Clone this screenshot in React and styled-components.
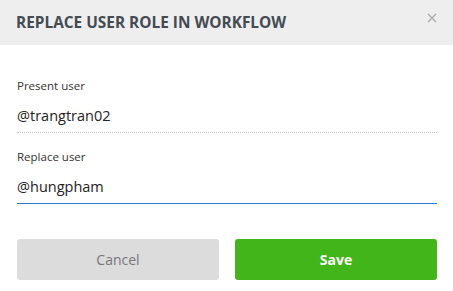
import React, { useState } from 'react';
import styled, { createGlobalStyle } from 'styled-components';

const GlobalStyle = createGlobalStyle`
  html, body {
    margin: 0;
    padding: 0;
    background: #ffffff;
    font-family: "Open Sans", "Noto Sans", sans-serif;
  }
`;

const DialogStyled = styled.div`
  width: 453px;
  height: 291px;
  background: #ffffff;
  display: flex;
  flex-direction: column;
`;

const HeaderStyled = styled.div`
  height: 45px;
  background: #eeeeee;
  display: flex;
  align-items: center;
  justify-content: space-between;
  padding: 0 14px 0 16px;
  box-sizing: border-box;
`;

const Title = styled.h1`
  margin: 0;
  font-size: 15.4px;
  font-weight: 700;
  color: #444b52;
`;

const CloseButton = styled.button`
  border: none;
  background: none;
  padding: 0;
  width: 14px;
  height: 14px;
  margin-top: -10px;
  display: flex;
  align-items: center;
  justify-content: center;
  cursor: pointer;
`;

const BodyStyled = styled.div`
  padding: 33px 16px 0 17px;
  display: flex;
  flex-direction: column;
`;

const Field = styled.div`
  display: flex;
  flex-direction: column;
  margin-bottom: ${p => p.$gap || 0}px;
`;

const Label = styled.label`
  font-size: 11.5px;
  color: #333333;
  line-height: 16px;
`;

const Value = styled.input`
  border: none;
  outline: none;
  padding: 0 0 6px;
  margin-top: 10px;
  height: 22px;
  font-family: inherit;
  font-size: 14.5px;
  color: #222222;
  background: transparent;
  border-bottom: 1px ${p => (p.$active ? 'solid #2a7bd4' : 'dotted #c8c8c8')};
  box-sizing: content-box;
`;

const Footer = styled.div`
  display: grid;
  grid-template-columns: 1fr 1fr;
  gap: 16px;
  padding: 35px 16px 0 17px;
`;

const Button = styled.button`
  height: 41px;
  border: none;
  border-radius: 3px;
  font-family: inherit;
  font-size: 14px;
  cursor: pointer;
  background: ${p => (p.$primary ? '#42b619' : '#dcdcdc')};
  color: ${p => (p.$primary ? '#ffffff' : '#777777')};
  font-weight: ${p => (p.$primary ? 700 : 400)};
`;

export default function App() {
  const [present, setPresent] = useState('@trangtran02');
  const [replace, setReplace] = useState('@hungpham');
  return (
    <>
      <GlobalStyle />
      <DialogStyled>
        <HeaderStyled>
          <Title>REPLACE USER ROLE IN WORKFLOW</Title>
          <CloseButton aria-label="close">
            <svg width="10" height="10" viewBox="0 0 10 10">
              <path d="M1 1 L9 9 M9 1 L1 9" stroke="#a9a9a9" strokeWidth="1.2" />
            </svg>
          </CloseButton>
        </HeaderStyled>
        <BodyStyled>
          <Field $gap={16}>
            <Label>Present user</Label>
            <Value value={present} onChange={e => setPresent(e.target.value)} />
          </Field>
          <Field>
            <Label>Replace user</Label>
            <Value $active value={replace} onChange={e => setReplace(e.target.value)} />
          </Field>
        </BodyStyled>
        <Footer>
          <Button>Cancel</Button>
          <Button $primary>Save</Button>
        </Footer>
      </DialogStyled>
    </>
  );
}
